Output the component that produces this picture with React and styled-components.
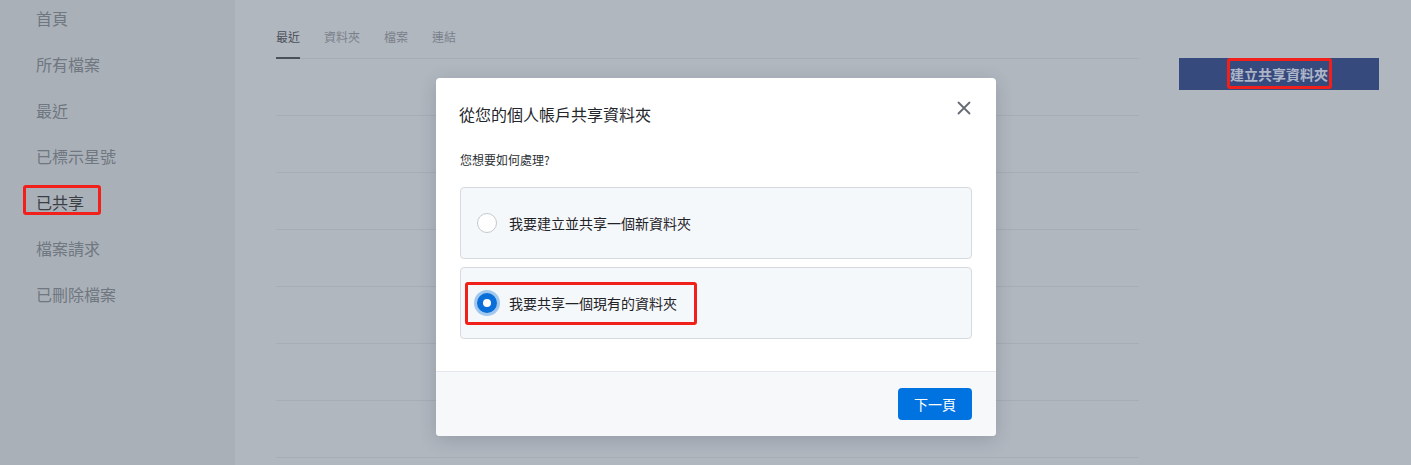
import styled, { createGlobalStyle } from "styled-components";

const GlobalStyle = createGlobalStyle`
  html, body {
    margin: 0;
    padding: 0;
  }
  body {
    font-family: "Noto Sans CJK TC", "Noto Sans", "Liberation Sans", sans-serif;
    overflow: hidden;
  }
  * {
    box-sizing: border-box;
  }
`;

const Page = styled.div`
  display: grid;
  grid-template-columns: 235px 1fr;
  width: 1411px;
  height: 465px;
  overflow: hidden;
  position: relative;
`;

const Sidebar = styled.nav`
  background: #aab0b8;
  padding-left: 36px;
`;

const NavList = styled.ul`
  list-style: none;
  margin: -5px 0 0;
  padding: 0;
`;

const NavItem = styled.li`
  height: 46px;
  display: flex;
  align-items: center;
  font-size: 16px;
  color: ${(p) => (p.active ? "#3a3f46" : "#6f7780")};
`;

const Mark = styled.span`
  position: relative;
  display: inline-flex;
  align-items: center;
  line-height: 20px;

  &::after {
    content: "";
    position: absolute;
    top: ${(p) => p.t}px;
    right: ${(p) => p.r}px;
    bottom: ${(p) => p.b}px;
    left: ${(p) => p.l}px;
    border: 3px solid #f2201a;
    border-radius: 3px;
    pointer-events: none;
  }
`;

const Main = styled.main`
  background: #b1b7bf;
  padding-left: 41px;
  display: flex;
  align-items: flex-start;
`;

const Content = styled.section`
  width: 863px;
`;

const Tabs = styled.div`
  display: flex;
  gap: 24px;
  padding-top: 28px;
  border-bottom: 1px solid #a6adb6;
`;

const Tab = styled.div`
  font-size: 12px;
  line-height: 18px;
  padding-bottom: 11px;
  color: ${(p) => (p.active ? "#4b5159" : "#7a818b")};
  border-bottom: 2px solid ${(p) => (p.active ? "#4b5159" : "transparent")};
  margin-bottom: -1px;
`;

const Row = styled.div`
  height: 57px;
  border-bottom: 1px solid #a6adb6;
`;

const Aside = styled.aside`
  margin-left: 40px;
  padding-top: 58px;
`;

const ShareButton = styled.div`
  width: 200px;
  height: 32px;
  background: #374a7e;
  color: #adb6c8;
  font-size: 14px;
  font-weight: 700;
  display: flex;
  align-items: center;
  justify-content: center;
`;

const Modal = styled.div`
  position: absolute;
  top: 78px;
  left: 436px;
  width: 560px;
  background: #ffffff;
  border-radius: 4px;
  box-shadow: 0 4px 18px rgba(30, 40, 55, 0.18);
  overflow: hidden;
`;

const Header = styled.div`
  display: flex;
  justify-content: space-between;
  align-items: flex-start;
  padding: 24px 22px 0 23px;
`;

const Title = styled.h2`
  margin: 0;
  font-size: 16px;
  line-height: 24px;
  font-weight: 400;
  color: #23272c;
`;

const Close = styled.button`
  border: 0;
  background: none;
  padding: 0;
  margin: -4px 0 0;
  width: 20px;
  height: 20px;
  display: flex;
  align-items: center;
  justify-content: center;
  color: #656b73;
`;

const Body = styled.div`
  padding: 25px 24px 32px;
`;

const Question = styled.p`
  margin: 0 0 18px;
  font-size: 12px;
  line-height: 18px;
  color: #2b2f34;
`;

const Options = styled.div`
  display: flex;
  flex-direction: column;
  gap: 8px;
`;

const Option = styled.label`
  height: 72px;
  display: flex;
  align-items: center;
  padding-left: 16px;
  background: #f5f8fb;
  border: 1px solid #d6dae0;
  border-radius: 4px;
`;

const Radio = styled.span`
  width: 20px;
  height: 20px;
  border-radius: 50%;
  flex: none;
  background: #ffffff;
  border: ${(p) => (p.checked ? "6px solid #0a6fd8" : "1px solid #c4c9cf")};
  box-shadow: ${(p) => (p.checked ? "0 0 0 3px rgba(10, 111, 216, 0.35)" : "none")};
`;

const OptionText = styled.span`
  margin-left: 12px;
  font-size: 14px;
  line-height: 20px;
  color: #1f2328;
`;

const Footer = styled.div`
  display: flex;
  justify-content: flex-end;
  padding: 16px 24px 16px;
  background: #f7f8fa;
  border-top: 1px solid #e4e7eb;
`;

const NextButton = styled.button`
  height: 32px;
  padding: 0 16px;
  border: 0;
  border-radius: 4px;
  background: #0073e1;
  color: #ffffff;
  font-family: inherit;
  font-size: 14px;
`;

const navItems = ["首頁", "所有檔案", "最近", "已標示星號", "已共享", "檔案請求", "已刪除檔案"];
const tabs = ["最近", "資料夾", "檔案", "連結"];

export default function App() {
  return (
    <>
      <GlobalStyle />
      <Page>
        <Sidebar>
          <NavList>
            {navItems.map((item) => (
              <NavItem key={item} active={item === "已共享"}>
                {item === "已共享" ? (
                  <Mark t={-7} r={-17} b={-3} l={-13}>
                    {item}
                  </Mark>
                ) : (
                  item
                )}
              </NavItem>
            ))}
          </NavList>
        </Sidebar>
        <Main>
          <Content>
            <Tabs>
              {tabs.map((t, i) => (
                <Tab key={t} active={i === 0}>
                  {t}
                </Tab>
              ))}
            </Tabs>
            {[0, 1, 2, 3, 4, 5, 6].map((r) => (
              <Row key={r} />
            ))}
          </Content>
          <Aside>
            <ShareButton>
              <Mark t={-6} r={-4} b={-5} l={-3}>
                建立共享資料夾
              </Mark>
            </ShareButton>
          </Aside>
        </Main>

        <Modal>
          <Header>
            <Title>從您的個人帳戶共享資料夾</Title>
            <Close aria-label="close">
              <svg width="14" height="14" viewBox="0 0 14 14">
                <path d="M1.5 1.5 L12.5 12.5 M12.5 1.5 L1.5 12.5" stroke="currentColor" strokeWidth="1.8" strokeLinecap="round" />
              </svg>
            </Close>
          </Header>
          <Body>
            <Question>您想要如何處理?</Question>
            <Options>
              <Option>
                <Radio />
                <OptionText>我要建立並共享一個新資料夾</OptionText>
              </Option>
              <Option>
                <Mark t={-11} r={-20} b={-12} l={-12}>
                  <Radio checked />
                  <OptionText>我要共享一個現有的資料夾</OptionText>
                </Mark>
              </Option>
            </Options>
          </Body>
          <Footer>
            <NextButton>下一頁</NextButton>
          </Footer>
        </Modal>
      </Page>
    </>
  );
}
